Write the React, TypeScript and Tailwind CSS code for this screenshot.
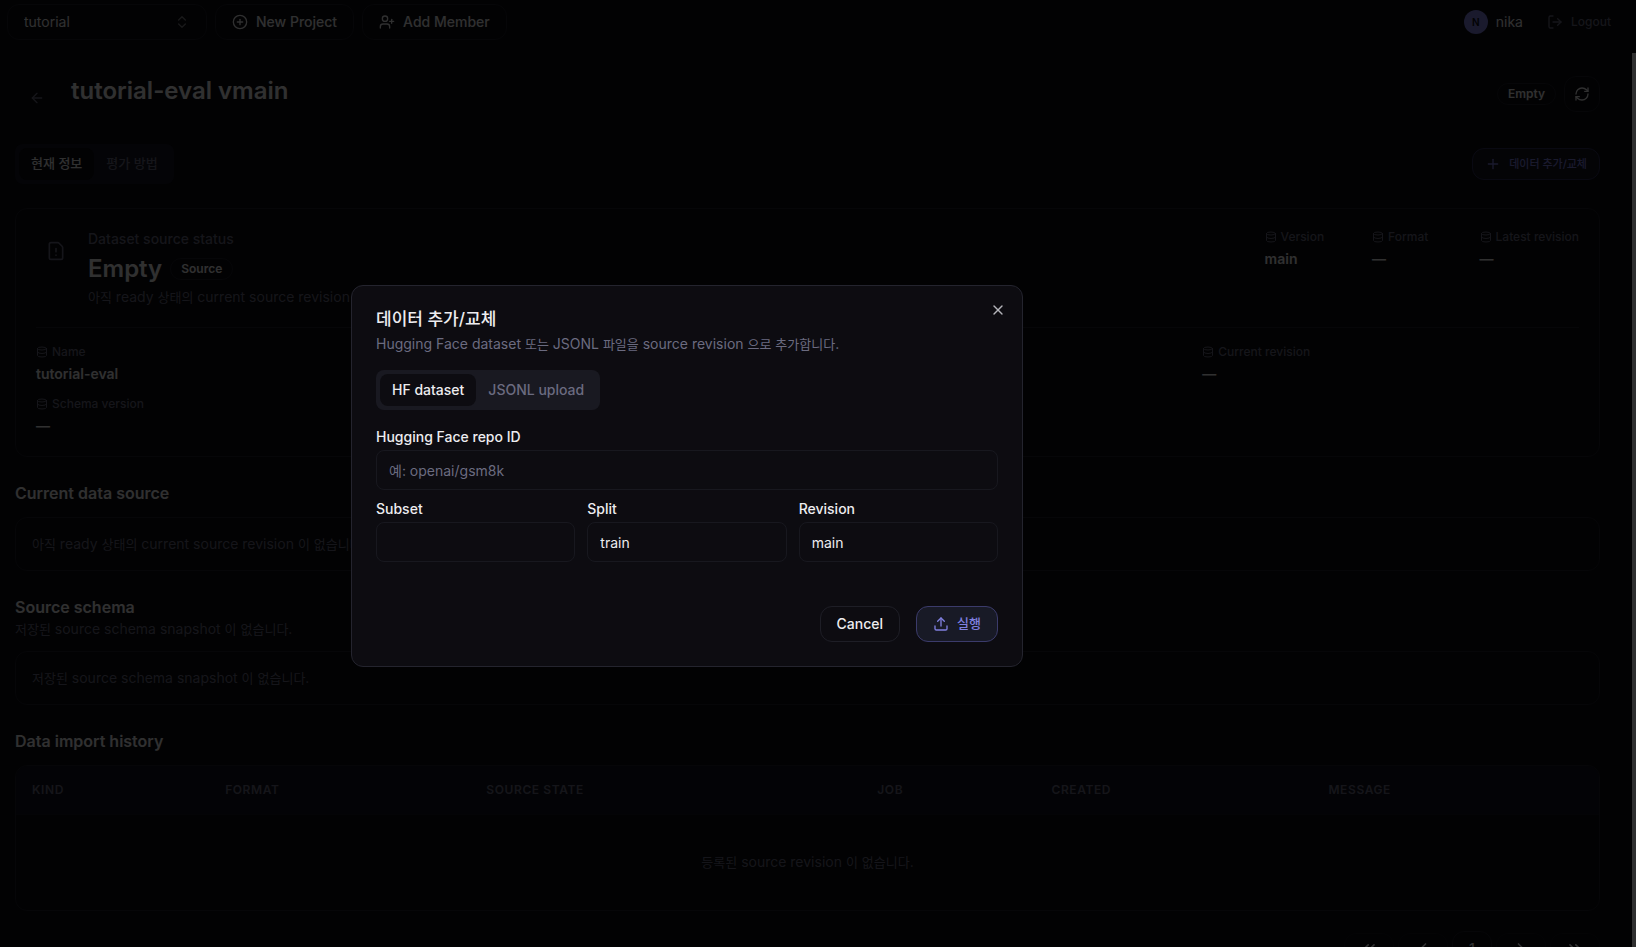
import { useId, useState } from "react";
import type { ReactNode } from "react";
import {
  ArrowLeft,
  ChevronLeft,
  ChevronRight,
  ChevronsLeft,
  ChevronsRight,
  ChevronsUpDown,
  CirclePlus,
  Database,
  FileWarning,
  LogOut,
  Plus,
  RefreshCw,
  Upload,
  UserPlus,
  X,
} from "lucide-react";

/* Sets Hangul runs one pixel smaller so that they sit evenly beside Latin text at 14px. */
function Mixed({ text }: { text: string }) {
  return (
    <>
      {text.split(/([\uac00-\ud7a3]+)/).map((run, index) =>
        index % 2 === 1 ? (
          <span key={index} className="text-[13px]">
            {run}
          </span>
        ) : (
          run
        ),
      )}
    </>
  );
}

function Metric({ label, value, className = "" }: { label: string; value: string; className?: string }) {
  return (
    <div className={className}>
      <dt className="flex items-center gap-1 text-xs font-medium text-[#6b6b80]">
        <Database size={12} />
        {label}
      </dt>
      <dd className="mt-1 text-sm font-semibold">{value}</dd>
    </div>
  );
}

function Badge({ children }: { children: ReactNode }) {
  return (
    <span className="rounded-full border border-[#1e1e28] px-2.5 py-0.5 text-xs font-semibold">{children}</span>
  );
}

function EmptyBox({ text }: { text: string }) {
  return (
    <div className="mt-3 rounded-xl border border-[#1e1e28] p-4 text-sm text-[#6b6b80]">
      <Mixed text={text} />
    </div>
  );
}

function Field({
  label,
  value = "",
  placeholder,
}: {
  label: string;
  value?: string;
  placeholder?: string;
}) {
  const id = useId();
  return (
    <div className="flex min-w-0 flex-col gap-1.5">
      <label htmlFor={id} className="text-sm/[14px] font-medium">
        {label}
      </label>
      <input
        id={id}
        type="text"
        defaultValue={value}
        placeholder={placeholder}
        className="h-10 w-full rounded-lg border border-[#18181f] bg-transparent px-3 text-sm outline-none placeholder:text-[#6b6b80]"
      />
    </div>
  );
}

const columns = [
  { name: "Kind", width: "w-[12.2%]" },
  { name: "Format", width: "w-[16.5%]" },
  { name: "Source state", width: "w-[24.7%]" },
  { name: "Job", width: "w-[11%]" },
  { name: "Created", width: "w-[17.5%]" },
  { name: "Message", width: "w-[18.1%]" },
];

function PageButton({ label, children }: { label: string; children: ReactNode }) {
  return (
    <button
      aria-label={label}
      className="flex h-8 w-[50px] items-center justify-center rounded-xl border border-[#14141b]"
    >
      {children}
    </button>
  );
}

function TopBar() {
  return (
    <header className="flex h-[53px] shrink-0 items-start justify-between pt-1 pr-[13px] pl-[7px]">
      <div className="flex gap-2">
        <div className="relative">
          <select
            aria-label="Workspace"
            className="h-9 w-[200px] appearance-none rounded-xl border border-[#1e1e28] bg-transparent px-4 text-sm"
          >
            <option>tutorial</option>
          </select>
          <ChevronsUpDown size={16} className="pointer-events-none absolute top-2.5 right-[17px] opacity-50" />
        </div>
        <button className="flex h-9 items-center gap-2 rounded-xl border border-[#1e1e28] px-4 text-sm font-medium">
          <CirclePlus size={16} />
          New Project
        </button>
        <button className="flex h-9 items-center gap-2 rounded-xl border border-[#1e1e28] px-4 text-sm font-medium">
          <UserPlus size={16} />
          Add Member
        </button>
      </div>
      <div className="flex h-9 items-center gap-3">
        <div className="flex items-center gap-2 text-sm">
          <span className="flex size-6 items-center justify-center rounded-full bg-[#8080e0] text-[10px] font-semibold text-[#0a0a0f]">
            N
          </span>
          nika
        </div>
        <button className="flex h-8 items-center gap-2 px-3 text-xs font-medium text-[#6b6b80]">
          <LogOut size={16} />
          Logout
        </button>
      </div>
    </header>
  );
}

function Page() {
  return (
    <main className="flex flex-col pt-[23px] pr-[32px] pl-[15px]">
      <div className="flex items-start justify-between">
        <div className="flex">
          <button aria-label="Back" className="mt-1 ml-1 flex size-9 items-center justify-center text-[#6b6b80]">
            <ArrowLeft size={16} />
          </button>
          <h1 className="ml-4 text-2xl/[30px] font-semibold">tutorial-eval vmain</h1>
        </div>
        <div className="flex items-center gap-2">
          <Badge>Empty</Badge>
          <button
            aria-label="Refresh"
            className="flex size-9 items-center justify-center rounded-xl border border-[#1e1e28]"
          >
            <RefreshCw size={16} />
          </button>
        </div>
      </div>

      <div className="mt-7 flex items-center justify-between">
        <div role="tablist" className="flex h-10 rounded-lg bg-[#161624] p-1 text-[13px] font-medium">
          <button role="tab" aria-selected="true" className="rounded-lg bg-[#0a0a0f] px-3">
            현재 정보
          </button>
          <button role="tab" aria-selected="false" className="px-3 text-[#6b6b80]">
            평가 방법
          </button>
        </div>
        <button className="flex h-8 items-center gap-2 rounded-xl border border-[#31315a] bg-[#141420] px-3 text-[11px] font-medium text-[#8080e0]">
          <Plus size={16} />
          데이터 추가/교체
        </button>
      </div>

      <section className="mt-6 rounded-xl border border-[#1e1e28] p-5">
        <div className="flex items-start justify-between">
          <div className="flex gap-3">
            <span className="mt-0.5 flex size-10 items-center justify-center text-[#6b6b80]">
              <FileWarning size={20} />
            </span>
            <div>
              <p className="text-sm font-medium text-[#6b6b80]">Dataset source status</p>
              <div className="mt-1 flex items-center gap-2">
                <h2 className="text-2xl font-semibold">Empty</h2>
                <Badge>Source</Badge>
              </div>
              <p className="mt-0.5 text-sm text-[#6b6b80]">
                <Mixed text="아직 ready 상태의 current source revision 이 없습니다." />
              </p>
            </div>
          </div>
          <dl className="grid grid-cols-3 gap-2">
            <Metric label="Version" value="main" />
            <Metric label="Format" value="—" />
            <Metric label="Latest revision" value="—" />
          </dl>
        </div>
        <dl className="mt-5 grid grid-cols-4 gap-3 border-t border-[#1e1e28] pt-4">
          <Metric label="Name" value="tutorial-eval" />
          <Metric label="Current revision" value="—" className="col-start-4" />
          <Metric label="Schema version" value="—" />
        </dl>
      </section>

      <section className="mt-6">
        <h2 className="font-semibold">Current data source</h2>
        <EmptyBox text="아직 ready 상태의 current source revision 이 없습니다." />
      </section>

      <section className="mt-6">
        <h2 className="font-semibold">Source schema</h2>
        <p className="text-sm text-[#6b6b80]">
          <Mixed text="저장된 source schema snapshot 이 없습니다." />
        </p>
        <EmptyBox text="저장된 source schema snapshot 이 없습니다." />
      </section>

      <section className="mt-6">
        <h2 className="font-semibold">Data import history</h2>
        <div className="mt-3 overflow-hidden rounded-xl border border-[#1e1e28]">
          <table className="w-full table-fixed">
            <thead className="bg-[#12121f]">
              <tr className="h-12 border-b border-[#171722]">
                {columns.map((column) => (
                  <th
                    key={column.name}
                    className={`${column.width} px-4 text-left text-xs font-semibold tracking-wider text-[#6b6b80] uppercase`}
                  >
                    {column.name}
                  </th>
                ))}
              </tr>
            </thead>
            <tbody>
              <tr className="h-24">
                <td colSpan={6} className="text-center text-sm text-[#6b6b80]">
                  <Mixed text="등록된 source revision 이 없습니다." />
                </td>
              </tr>
            </tbody>
          </table>
        </div>
        <nav aria-label="Pagination" className="mt-5 flex items-center justify-end gap-1 text-sm font-medium">
          <PageButton label="First page">
            <ChevronsLeft size={20} />
          </PageButton>
          <PageButton label="Previous page">
            <ChevronLeft size={20} />
          </PageButton>
          <button aria-current="page" className="h-9 w-10 rounded-xl border border-[#1e1e28]">
            1
          </button>
          <PageButton label="Next page">
            <ChevronRight size={20} />
          </PageButton>
          <PageButton label="Last page">
            <ChevronsRight size={20} />
          </PageButton>
        </nav>
      </section>
    </main>
  );
}

function ImportDialog() {
  const [tab, setTab] = useState("hf");
  const tabClass = (active: boolean) =>
    active ? "rounded-lg bg-[#0d0c11] px-3" : "rounded-lg px-3 text-[#6b6b80]";
  return (
    <div
      role="dialog"
      aria-modal="true"
      aria-labelledby="dialog-title"
      className="relative w-full max-w-[672px] rounded-xl border border-[#24242e] bg-[#0d0c11] p-6"
    >
      <h2 id="dialog-title" className="text-[17px]/[18px] font-medium">
        데이터 추가/교체
      </h2>
      <p className="mt-1.5 text-sm text-[#6b6b80]">
        <Mixed text="Hugging Face dataset 또는 JSONL 파일을 source revision 으로 추가합니다." />
      </p>
      <div role="tablist" className="mt-4 flex h-10 w-fit rounded-lg bg-[#191921] p-1 text-sm font-medium">
        <button role="tab" aria-selected={tab === "hf"} onClick={() => setTab("hf")} className={tabClass(tab === "hf")}>
          HF dataset
        </button>
        <button
          role="tab"
          aria-selected={tab === "jsonl"}
          onClick={() => setTab("jsonl")}
          className={tabClass(tab === "jsonl")}
        >
          JSONL upload
        </button>
      </div>
      <form className="mt-5 flex flex-col gap-3" onSubmit={(event) => event.preventDefault()}>
        <Field label="Hugging Face repo ID" placeholder="예: openai/gsm8k" />
        <div className="grid grid-cols-3 gap-3">
          <Field label="Subset" />
          <Field label="Split" value="train" />
          <Field label="Revision" value="main" />
        </div>
        <div className="mt-8 flex justify-end gap-4">
          <button type="button" className="h-9 rounded-xl border border-[#1e1e26] px-4 text-sm font-medium">
            Cancel
          </button>
          <button
            type="submit"
            className="flex h-9 items-center gap-2 rounded-xl border border-[#3b3b6b] bg-[#181a26] px-4 text-[13px] font-medium text-[#8080e0]"
          >
            <Upload size={16} />
            실행
          </button>
        </div>
      </form>
      <button aria-label="Close" className="absolute top-4 right-4 text-[#b4b4ba]">
        <X size={16} />
      </button>
    </div>
  );
}

export default function App() {
  return (
    <div className="relative flex h-screen flex-col overflow-hidden bg-[#0a0a0f] font-['Inter','Noto_Sans_CJK_KR',sans-serif] text-[#ededf0]">
      <TopBar />
      <div className="flex min-h-0 grow overflow-hidden">
        <div className="min-w-0 grow">
          <Page />
        </div>
        <div className="w-1 shrink-0 bg-[#f0f0f0]" />
      </div>
      <div className="absolute inset-0 flex items-center justify-center bg-black/80 pt-[5px] pr-[262px]">
        <ImportDialog />
      </div>
    </div>
  );
}
